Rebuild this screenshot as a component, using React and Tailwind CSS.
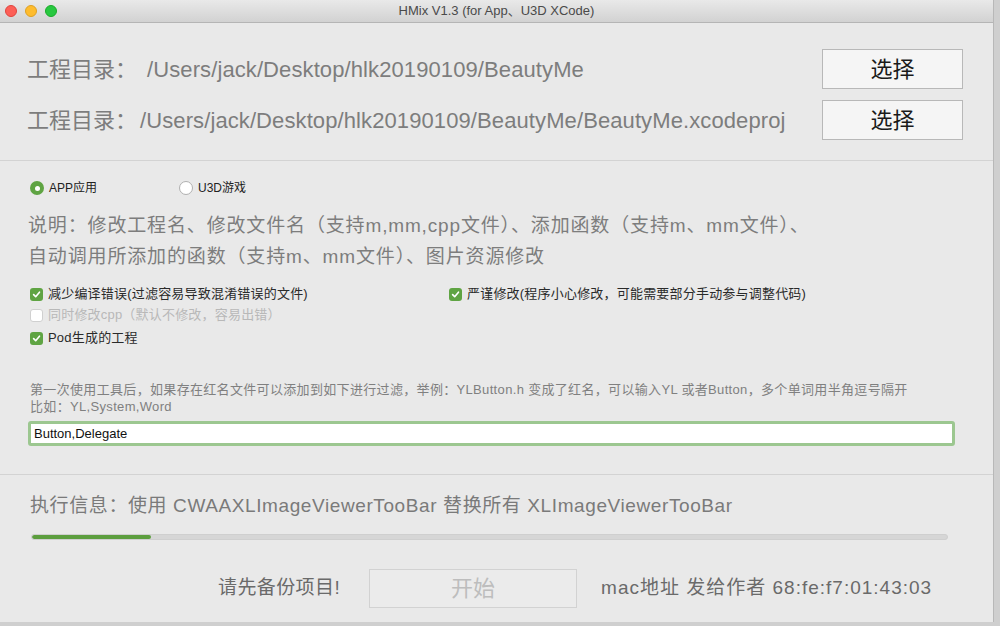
const font = "font-['Liberation_Sans','Noto_Sans_CJK_SC',sans-serif]"

function Check({ checked = true, disabled = false, label }) {
  return (
    <label className={`flex items-center gap-[5px] h-5 text-[13px] tracking-[0.2px] ${disabled ? 'text-[#b8b8b8]' : 'text-[#2a2a2a]'}`}>
      {checked ? (
        <span className="w-[13px] h-[13px] rounded-[3px] bg-[#5fa443] flex items-center justify-center">
          <svg width="9" height="9" viewBox="0 0 10 10">
            <path d="M1.8 5.2 L4.1 7.4 L8.3 2.4" fill="none" stroke="white" strokeWidth="1.8" strokeLinecap="round" strokeLinejoin="round" />
          </svg>
        </span>
      ) : (
        <span className="w-[13px] h-[13px] rounded-[3px] bg-white border border-[#d0d0d0]" />
      )}
      <span>{label}</span>
    </label>
  )
}

function Radio({ checked, label }) {
  return (
    <label className="flex items-center gap-[5px] text-[12px] text-[#222]">
      {checked ? (
        <span className="w-[14px] h-[14px] rounded-full bg-[#5fa443] flex items-center justify-center">
          <span className="w-[5px] h-[5px] rounded-full bg-white" />
        </span>
      ) : (
        <span className="w-[14px] h-[14px] rounded-full bg-white border border-[#b0b0b0]" />
      )}
      <span>{label}</span>
    </label>
  )
}

function PathRow({ label, gap, path }) {
  return (
    <div className="flex items-center h-10">
      <span className="text-[22px] text-[#7d7d7d] whitespace-nowrap">{label}</span>
      <span className={`text-[22px] text-[#7d7d7d] whitespace-nowrap tracking-[0.1px] ${gap}`}>{path}</span>
      <button className="ml-auto w-[141px] h-10 bg-[#f5f5f5] border border-[#b8b8b8] text-[22px] text-[#1a1a1a]">
        选择
      </button>
    </div>
  )
}

export default function App() {
  return (
    <div className={`w-[1000px] h-[626px] bg-[#cfcfcf] overflow-hidden ${font}`}>
      <div className="w-[994px] h-[622px] bg-[#e9e9e9] border-r border-[#b8b8b8] flex flex-col">
        {/* title bar */}
        <div className="h-[23px] shrink-0 bg-gradient-to-b from-[#e9e9e9] to-[#d2d2d2] border-b border-[#b5b5b5] flex items-center relative">
          <div className="flex items-center gap-2 pl-[5px]">
            <span className="w-3 h-3 rounded-full bg-[#fd5f57] border border-[#e0443e]" />
            <span className="w-3 h-3 rounded-full bg-[#febc2e] border border-[#dea123]" />
            <span className="w-3 h-3 rounded-full bg-[#28c840] border border-[#1aab29]" />
          </div>
          <div className="absolute inset-0 flex items-center justify-center text-[13px] text-[#4a4a4a]">
            HMix V1.3 (for App、U3D XCode)
          </div>
        </div>

        {/* paths */}
        <div className="pt-[26px] pb-[20px] pl-[27px] pr-[30px] flex flex-col gap-[11px] border-b border-[#d3d3d3]">
          <PathRow label="工程目录：" gap="ml-[10px]" path="/Users/jack/Desktop/hlk20190109/BeautyMe" />
          <PathRow label="工程目录：" gap="ml-[3px]" path="/Users/jack/Desktop/hlk20190109/BeautyMe/BeautyMe.xcodeproj" />
        </div>

        {/* options */}
        <div className="pt-[18px] pl-[30px] pb-[28px] border-b border-[#d3d3d3]">
          <div className="flex items-center h-4 mt-px">
            <div className="w-[149px]">
              <Radio checked label="APP应用" />
            </div>
            <Radio label="U3D游戏" />
          </div>
          <div className="mt-[14px] -ml-[2px] text-[19px] leading-[31px] tracking-[0.85px] text-[#7d7d7d]">
            <div>说明：修改工程名、修改文件名（支持m,mm,cpp文件）、添加函数（支持m、mm文件）、</div>
            <div>自动调用所添加的函数（支持m、mm文件）、图片资源修改</div>
          </div>
          <div className="mt-[12px] flex">
            <div className="w-[419px] flex flex-col">
              <Check label="减少编译错误(过滤容易导致混淆错误的文件)" />
              <div className="mt-px">
                <Check checked={false} disabled label="同时修改cpp（默认不修改，容易出错）" />
              </div>
              <div className="mt-[3px]">
                <Check label="Pod生成的工程" />
              </div>
            </div>
            <Check label="严谨修改(程序小心修改，可能需要部分手动参与调整代码)" />
          </div>
          <div className="mt-[33px] text-[13px] leading-[17px] tracking-[0.33px] text-[#808080]">
            <div>第一次使用工具后，如果存在红名文件可以添加到如下进行过滤，举例：YLButton.h 变成了红名，可以输入YL 或者Button，多个单词用半角逗号隔开</div>
            <div>比如：YL,System,Word</div>
          </div>
          <input
            readOnly
            value="Button,Delegate"
            className="mt-[6px] -ml-[2px] w-[927px] h-[25px] bg-white border-[3px] border-[#9cc790] rounded-[3px] px-[3px] text-[13px] text-[#111] outline-none"
          />
        </div>

        {/* run info */}
        <div className="pt-[18px] pl-[30px]">
          <div className="text-[19px] leading-[26px] tracking-[0.6px] text-[#7a7a7a]">
            执行信息：使用 CWAAXLImageViewerTooBar 替换所有 XLImageViewerTooBar
          </div>
          <div className="mt-[15px] ml-px w-[917px] h-[6px] rounded-full bg-[#d6d6d6] overflow-hidden border border-[#cfcfcf]">
            <div className="h-full w-[119px] bg-[#5c9e3e] rounded-full" />
          </div>
          <div className="mt-[29px] pl-[188px] flex items-center">
            <span className="text-[19px] tracking-[0.4px] text-[#6a6a6a]">请先备份项目!</span>
            <button className="ml-[29px] w-[208px] h-[39px] border border-[#d2d2d2] bg-[#ebebeb] text-[22px] text-[#bdbdbd]">
              开始
            </button>
            <span className="ml-[24px] text-[19px] tracking-[1px] text-[#6a6a6a]">mac地址 发给作者 68:fe:f7:01:43:03</span>
          </div>
        </div>
      </div>
    </div>
  )
}
